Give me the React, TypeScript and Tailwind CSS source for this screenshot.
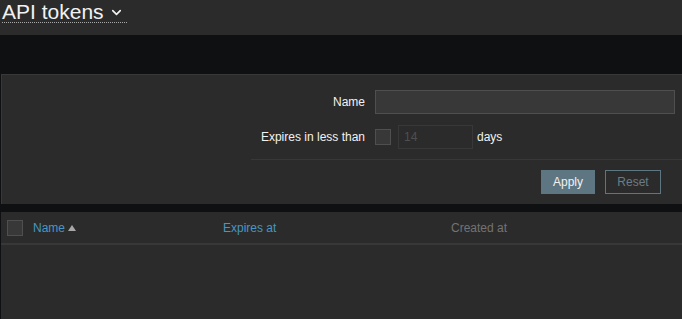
import { ChevronDown } from "lucide-react"

export default function App() {
    return (
        <div className="w-[682px] h-[319px] bg-[#0e1012] overflow-hidden text-[12px] text-[#f2f2f2]" style={{ fontFamily: '"Liberation Sans", Arial, sans-serif' }}>
            <header className="h-[35px] bg-[#2b2b2b] pl-[2px] pt-[1px]">
                <button className="flex items-center border-b border-dotted border-[#a8a8a8] leading-[21px] text-[21px] text-[#f2f2f2] pr-[3px]">
                    API tokens
                    <ChevronDown className="w-[15px] h-[15px] ml-[5px] mt-[2px]" strokeWidth={2.6} />
                </button>
            </header>

            <div className="h-[39px]" />

            <div className="ml-[1px] h-[130px] bg-[#2b2b2b] border-l border-t border-[#383838]">
                <div className="flex flex-col gap-[11px] pt-[15px]">
                    <div className="flex items-center">
                        <label className="w-[373px] text-right pr-[10px]">Name</label>
                        <input className="w-[300px] h-[24px] bg-[#383838] border border-[#4f4f4f] outline-none" />
                    </div>
                    <div className="flex items-center">
                        <label className="w-[373px] text-right pr-[10px]">Expires in less than</label>
                        <span className="w-[16px] h-[16px] bg-[#383838] border border-[#4f4f4f]" />
                        <input disabled value="14" className="ml-[7px] w-[75px] h-[24px] px-[5px] bg-transparent border border-[#383838] text-[#4f4f4f] outline-none" />
                        <span className="ml-[4px]">days</span>
                    </div>
                </div>
                <div className="ml-[249px] mt-[10px] border-t border-[#383838] flex justify-end gap-[10px] pt-[10px] pr-[21px]">
                    <button className="w-[54px] h-[24px] bg-[#5d7682] text-[#f2f2f2]">Apply</button>
                    <button className="w-[56px] h-[24px] border border-[#5d7682] text-[#6a7c86]">Reset</button>
                </div>
            </div>

            <div className="h-[8px]" />

            <div className="ml-[1px] h-[107px] bg-[#2b2b2b]">
                <div className="flex items-center h-[33px] border-b-2 border-[#383838]">
                    <span className="ml-[6px] w-[16px] h-[16px] bg-[#383838] border border-[#4f4f4f]" />
                    <span className="ml-[10px] w-[190px] text-[#4796c4] flex items-center">
                        Name
                        <svg width="8" height="6" viewBox="0 0 8 6" className="ml-[3px]">
                            <path d="M0 6 L4 0 L8 6 Z" fill="#a8a8a8" />
                        </svg>
                    </span>
                    <span className="w-[228px] text-[#4796c4]">Expires at</span>
                    <span className="text-[#737373]">Created at</span>
                </div>
            </div>
        </div>
    )
}
